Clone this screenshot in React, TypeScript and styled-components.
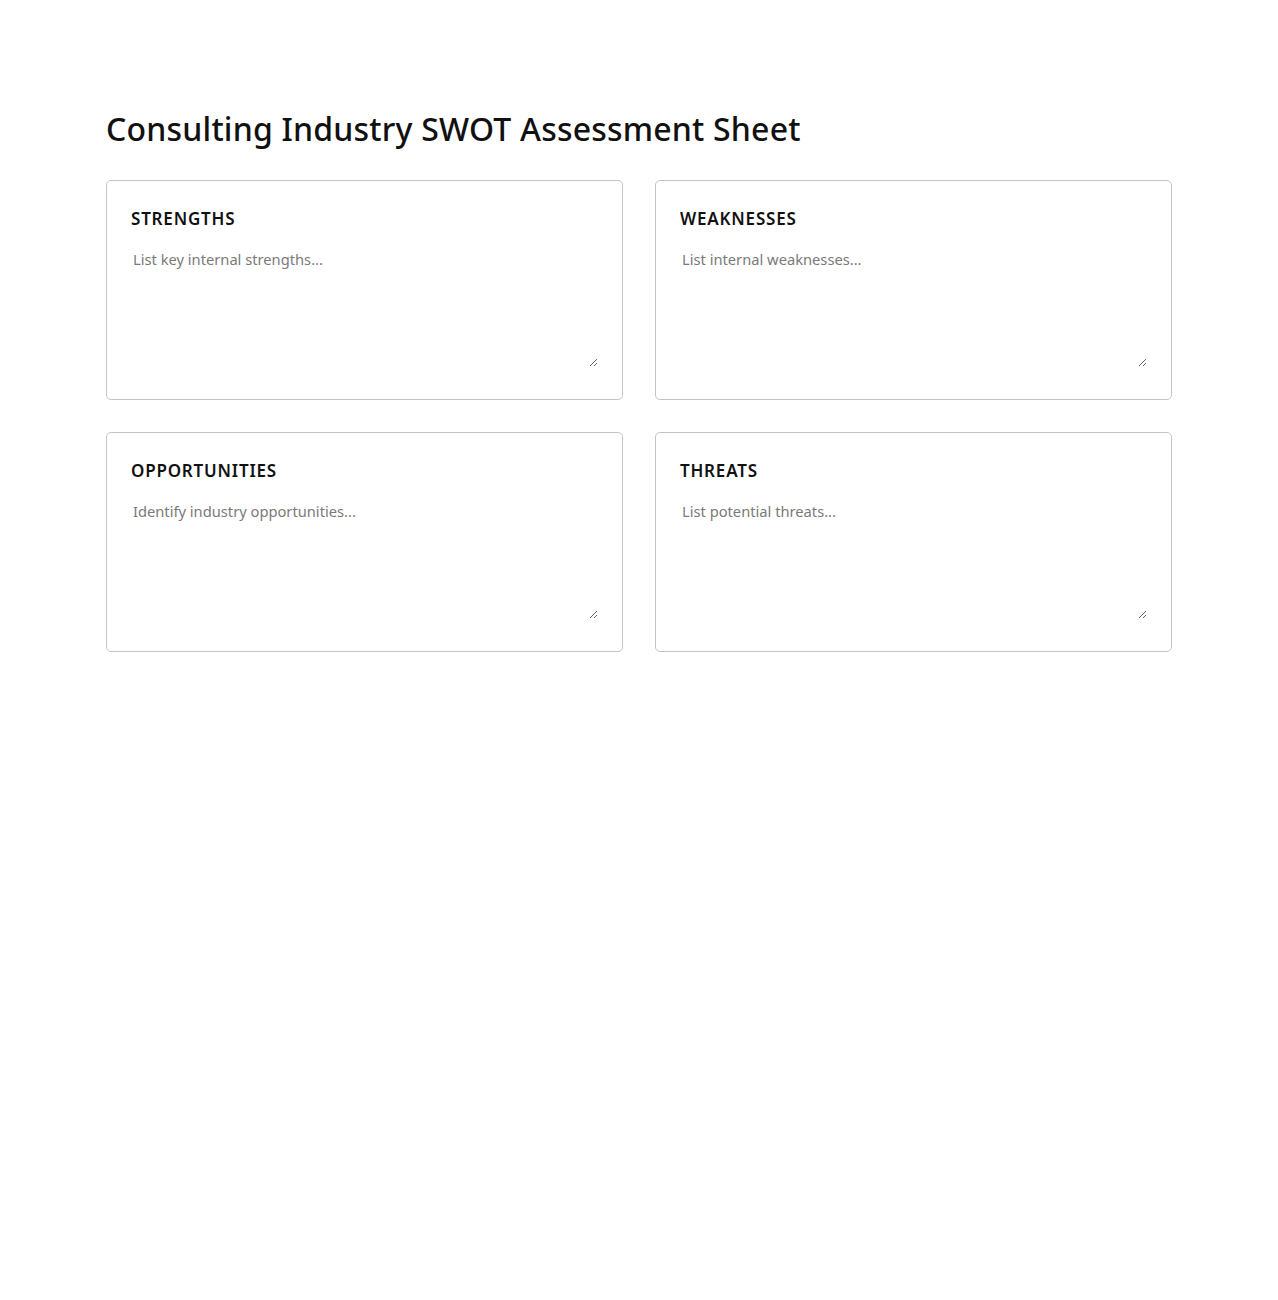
import React from "react";
import styled, { createGlobalStyle } from "styled-components";

const GlobalStyle = createGlobalStyle`
  html, body {
    margin: 0;
    padding: 0;
    background: #ffffff;
  }
  body {
    font-family: "Noto Sans", "Open Sans", sans-serif;
    color: #111;
  }
`;

const Page = styled.main`
  max-width: 1066px;
  margin: 0 auto;
  padding: 107px 0 40px;
`;

const Title = styled.h1`
  margin: 0 0 29px;
  font-size: 32px;
  line-height: 44px;
  font-weight: 500;
  letter-spacing: 0.2px;
  color: #111;
`;

const Grid = styled.div`
  display: grid;
  grid-template-columns: 1fr 1fr;
  gap: 32px;
`;

const Card = styled.section`
  border: 1px solid #c4c4c4;
  border-radius: 5px;
  padding: 24px;
  display: flex;
  flex-direction: column;
`;

const Heading = styled.h2`
  margin: 0 0 14px;
  font-size: 17px;
  line-height: 28px;
  font-weight: 600;
  letter-spacing: 0.8px;
  color: #111;
`;

const Notes = styled.textarea`
  display: block;
  width: 100%;
  box-sizing: border-box;
  height: 120px;
  border: none;
  outline: none;
  padding: 2px;
  margin: 0 0 8px;
  resize: vertical;
  font-family: "Noto Sans", "Open Sans", sans-serif;
  font-size: 14.7px;
  line-height: 20px;
  color: #333;
  background: transparent;
  &::placeholder {
    color: #7a7a7a;
  }
`;

const sections = [
  { title: "STRENGTHS", placeholder: "List key internal strengths..." },
  { title: "WEAKNESSES", placeholder: "List internal weaknesses..." },
  { title: "OPPORTUNITIES", placeholder: "Identify industry opportunities..." },
  { title: "THREATS", placeholder: "List potential threats..." },
];

export default function App() {
  return (
    <>
      <GlobalStyle />
      <Page>
        <Title>Consulting Industry SWOT Assessment Sheet</Title>
        <Grid>
          {sections.map((s) => (
            <Card key={s.title}>
              <Heading>{s.title}</Heading>
              <Notes placeholder={s.placeholder} />
            </Card>
          ))}
        </Grid>
      </Page>
    </>
  );
}
